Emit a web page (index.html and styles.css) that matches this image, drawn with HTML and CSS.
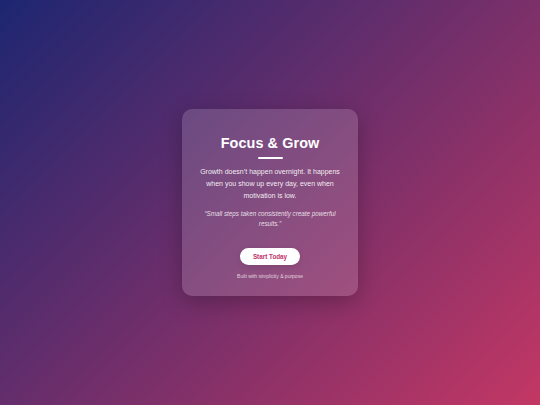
FILE: index.html
```html
<!DOCTYPE html>
<html lang="en">
<head>
<meta charset="utf-8">
<title>Focus &amp; Grow</title>
<link rel="stylesheet" href="styles.css">
</head>
<body>
<main class="page">
  <section class="card">
    <h1 class="title">Focus &amp; Grow</h1>
    <div class="bar"></div>
    <p class="text">Growth doesn’t happen overnight. It happens when you show up every day, even when motivation is low.</p>
    <p class="quote">“Small steps taken consistently create powerful results.”</p>
    <button class="btn">Start Today</button>
    <p class="foot">Built with simplicity &amp; purpose</p>
  </section>
</main>
</body>
</html>
```
FILE: styles.css
```css
html, body {
  margin: 0;
  padding: 0;
  height: 100%;
}
body {
  font-family: "Liberation Sans", Arial, sans-serif;
  background: linear-gradient(135deg, #1d2671 0%, #c33764 100%);
  color: #fff;
}
.page {
  height: 100%;
  display: flex;
  align-items: center;
  justify-content: center;
}
.card {
  width: 176px;
  box-sizing: border-box;
  padding: 26px 16px 16px;
  background: rgba(255, 255, 255, 0.15);
  border-radius: 10px;
  box-shadow: 0 6px 22px rgba(0, 0, 0, 0.25);
  display: flex;
  flex-direction: column;
  align-items: center;
  text-align: center;
}
.title {
  margin: 0;
  font-size: 14.4px;
  line-height: 1.2;
  font-weight: 700;
  letter-spacing: 0.1px;
}
.bar {
  width: 25px;
  height: 2px;
  background: #fff;
  border-radius: 1px;
  margin-top: 5px;
}
.text {
  margin: 6.5px 0 0;
  font-size: 7px;
  line-height: 1.75;
  color: rgba(255, 255, 255, 0.92);
}
.quote {
  margin: 6px 0 0;
  padding: 0 4px;
  font-size: 6.3px;
  line-height: 1.67;
  font-style: italic;
  color: rgba(255, 255, 255, 0.82);
}
.btn {
  margin-top: 18px;
  border: 0;
  background: #fff;
  color: #c0306a;
  font-family: inherit;
  font-weight: 700;
  font-size: 6.3px;
  line-height: 7.5px;
  padding: 5px 13px;
  border-radius: 10px;
  box-shadow: 0 2px 6px rgba(0, 0, 0, 0.12);
}
.foot {
  margin: 9px 0 0;
  font-size: 5px;
  line-height: 1.15;
  color: rgba(255, 255, 255, 0.75);
}
```
